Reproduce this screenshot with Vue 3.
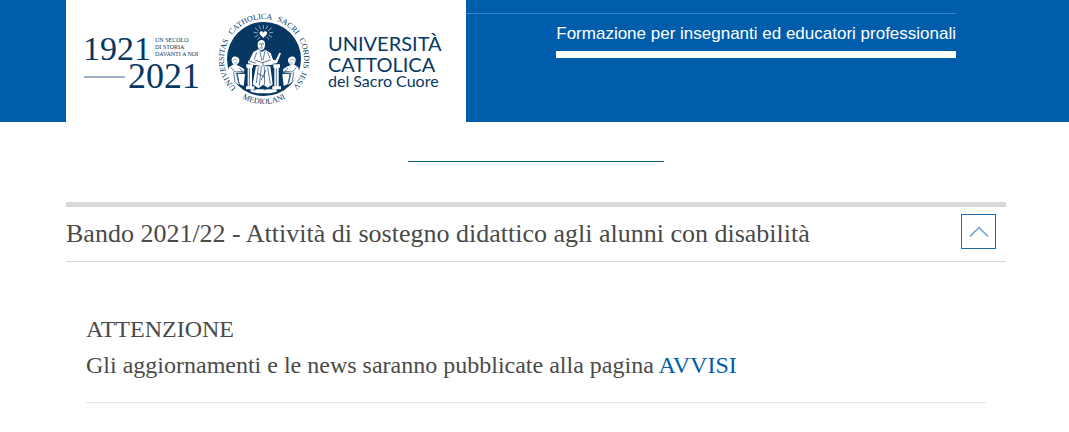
<template>
  <div class="page">
    <header class="header">
      <a class="logo" href="#" aria-label="Università Cattolica del Sacro Cuore">
        <svg class="logo-art" viewBox="0 0 400 122" width="400" height="122">
          <defs>
            <path id="ring-top" d="M198 99a40 40 0 1 1 0-80a40 40 0 1 1 0 80" />
            <path id="ring-bottom" d="M153 59a45 45 0 0 0 90 0" />
          </defs>

          <!-- centenary -->
          <g class="serif">
            <text x="17" y="60" font-size="34">1921</text>
            <text x="62" y="88" font-size="36">2021</text>
            <text v-for="(line, i) in motto" :key="line" x="89" :y="42 + i * 7" font-size="6">{{ line }}</text>
          </g>
          <path d="M18 77h41" stroke="#3d6288" />

          <!-- seal -->
          <g class="serif" font-size="8" text-anchor="middle">
            <text v-for="word in ringWords" :key="word.text">
              <textPath href="#ring-top" :startOffset="word.offset">{{ word.text }}</textPath>
            </text>
            <text><textPath href="#ring-bottom" startOffset="50%">MEDIOLANI</textPath></text>
          </g>
          <circle cx="198" cy="59" r="37" fill="#073763" />
          <g transform="translate(139 0) scale(.3333)" stroke-linecap="round" stroke-linejoin="round">
            <!-- radiant heart -->
            <path d="M175 114c-7-7-13-11-11-17c2-5 9-4 11 1c2-5 9-6 11-1c2 6-4 10-11 17z" fill="#fff" />
            <path
              d="M175 87V76M167 87l-5-10M183 87l5-10M160 92l-9-8M190 92l9-8M157 99l-10-2M193 99l10-2M159 106l-9 5M191 106l9 5M164 112l-6 6M186 112l6 6"
              stroke="#d7e1eb" stroke-width="2" fill="none"
            />
            <!-- side scribes -->
            <g v-for="side in scribes" :key="side" :transform="side" fill="#fff">
              <path d="M80 183c-2-10 6-16 14-13c8 2 11 9 8 17l-7 8l-11-2z" />
              <path d="M72 202l15-10l17 7l14 9l-1 9l-22 2l8 36l-19-14l-15-22z" />
              <path d="M98 221l22 1l-4 36l-12-5z" />
              <path d="M78 203l12 13l26-2M86 218l4 25M94 220l7 29M104 205l7 8" fill="none" stroke="#073763" stroke-width="2" />
              <path d="M84 181l8-3l5 5M89 188l7 1" fill="none" stroke="#5b7898" stroke-width="2" />
            </g>
            <!-- enthroned figure -->
            <path d="M158 137c-1-9 3-16 11-17c8-1 13 7 11 17c-1 8-5 14-11 14c-6 0-10-6-11-14z" fill="#fff" />
            <path d="M160 148l-15 8l-12 25l12 13l26 3l32-3l3-12l-9-23l-17-10l-9 7z" fill="#fff" />
            <path d="M130 182l22-5l22 8l23-9l15 5l11-23l5 2l-12 30l-37 4l-5 5l-45-9z" fill="#fff" />
            <path d="M153 199h43l7 54l-15 10l-13-9l-15 11l-17-12z" fill="#fff" />
            <path d="M124 193h20v10h-3v56h7v9h-25v-9h5v-56h-4zM205 193h20v10h-4v56h7v9h-26v-9h6v-56h-3z" fill="#fff" />
            <path d="M137 268h78v7l-20 5h-38l-20-5z" fill="#fff" />
            <path
              d="M163 133l5-2M172 131l4 1M170 133v6M165 144h8M155 158l-7 19M165 155l5 25M180 153l-6 27M188 158l7 16M151 181l21 7l24-8M174 188v9M134 184l17 5M160 203l-6 45M169 202l-6 54M178 203l1 50M188 203l8 48M158 220l20 12M183 211l-14 28M133 206v51M214 206v51M145 271l13-6M177 270l12-5M201 166l5 14"
              stroke="#073763" stroke-width="2" fill="none"
            />
          </g>

          <!-- wordmark -->
          <g class="wordmark">
            <text x="262" y="51" font-size="20">UNIVERSITÀ</text>
            <text x="262" y="72" font-size="20">CATTOLICA</text>
            <text x="262" y="87" font-size="16">del Sacro Cuore</text>
          </g>
        </svg>
      </a>
      <nav class="nav">
        <a class="nav-link" href="#">Formazione per insegnanti ed educatori professionali</a>
      </nav>
    </header>

    <main class="content">
      <hr class="divider">

      <section class="accordion">
        <div class="accordion-head">
          <h2 class="accordion-title">Bando 2021/22 - Attività di sostegno didattico agli alunni con disabilità</h2>
          <button
            class="toggle"
            type="button"
            aria-label="Bando 2021/22"
            aria-controls="bando"
            :aria-expanded="open"
            @click="open = !open"
          >
            <svg :class="{ closed: !open }" viewBox="0 0 20 12" width="20" height="12">
              <path d="M1 10.500L10 1.500L19 10.500" fill="none" stroke="#6f9fce" stroke-width="1.500" />
            </svg>
          </button>
        </div>
        <div v-show="open" id="bando" class="accordion-body">
          <p>ATTENZIONE</p>
          <p>Gli aggiornamenti e le news saranno pubblicate alla pagina <a href="#">AVVISI</a></p>
        </div>
      </section>
    </main>
  </div>
</template>

<script setup>
import { ref } from 'vue'

const open = ref(true)

const motto = ['UN SECOLO', 'DI STORIA', 'DAVANTI A NOI']

const ringWords = [
  { text: 'UNIVERSITAS', offset: '22.5%' },
  { text: 'CATHOLICA', offset: '44.2%' },
  { text: 'SACRI', offset: '60%' },
  { text: 'CORDIS', offset: '72.8%' },
  { text: 'JESV', offset: '83.6%' },
]

// the right scribe is the left one mirrored
const scribes = ['translate(0 0)', 'translate(352 0) scale(-1 1)']
</script>

<style>
body {
  margin: 0;
  background: #fff;
}
</style>

<style scoped>
.page {
  color: #4a4a4a;
  font-family: Georgia, "Liberation Serif", serif;
}

.header {
  display: flex;
  padding: 0 113px 0 66px;
  background: #005dab;
}

.logo {
  flex: none;
  background: #fff;
}

.logo-art {
  display: block;
  fill: #073763;
}

.serif {
  font-family: "Liberation Serif", serif;
}

.wordmark {
  font-family: Lato, sans-serif;
}

.nav {
  flex: 1;
  display: flex;
  justify-content: flex-end;
  align-items: flex-start;
  margin-top: 13px;
  border-top: 1px solid #3b83c3;
}

.nav-link {
  padding-top: 8px;
  padding-bottom: 5px;
  border-bottom: 7px solid #fff;
  color: #fff;
  font: 17px/24px "Helvetica Neue", "Liberation Sans", sans-serif;
  text-decoration: none;
  white-space: nowrap;
}

.content {
  padding: 39px 63px 28px 66px;
}

.divider {
  width: 256px;
  margin: 0 auto 40px;
  border: 0;
  border-top: 1px solid #0b6488;
}

.accordion {
  border-top: 5px solid #d9d9d9;
}

.accordion-head {
  display: flex;
  justify-content: space-between;
  align-items: flex-start;
  padding: 7px 10px 10px 0;
  border-bottom: 1px solid #d9d9d9;
}

.accordion-title {
  margin: 0;
  padding-top: 2px;
  font-size: 26px;
  font-weight: 400;
  line-height: 35px;
}

.toggle {
  display: flex;
  flex: none;
  justify-content: center;
  align-items: center;
  width: 35px;
  height: 35px;
  padding: 0;
  border: 1px solid #1f6da8;
  background: #fff;
  cursor: pointer;
}

.closed {
  transform: rotate(180deg);
}

.accordion-body {
  margin: 0 20px;
  padding: 49px 0 19px;
  border-bottom: 1px solid #e3e3e3;
}

.accordion-body p {
  margin: 0;
  font-size: 24px;
  line-height: 36px;
}

.accordion-body a {
  color: #005dab;
  text-decoration: none;
}
</style>
